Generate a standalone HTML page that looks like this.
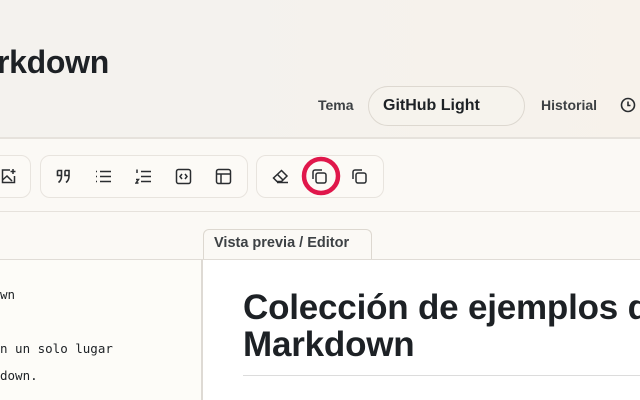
<!DOCTYPE html>
<html><head><meta charset="utf-8"><style>
body{margin:0;width:640px;height:400px;overflow:hidden;font-family:"Liberation Sans",sans-serif;background:#fbf9f5;position:relative}
.hdr{position:absolute;left:0;top:0;width:640px;height:137px;background:linear-gradient(90deg,#f4f2ee 0%,#f4f2ee 30%,#f7f2eb 100%);border-bottom:2px solid #e6e2dc}
.title{position:absolute;left:-3px;top:44px;font-size:32px;font-weight:bold;color:#1d2125;letter-spacing:-0.3px}
.tema{position:absolute;left:318px;top:97px;font-size:14px;font-weight:bold;color:#3d4144}
.sel{position:absolute;left:368px;top:86px;width:157px;height:40px;border:1px solid #ddd8d0;border-radius:20px;background:#f6f3ed;box-sizing:border-box}
.sel span{position:absolute;left:14px;top:10px;font-size:16px;font-weight:bold;color:#1d2125}
.hist{position:absolute;left:541px;top:97px;font-size:14px;font-weight:bold;color:#3d4144}
.grp{position:absolute;top:155px;height:43px;border:1px solid #e8e4de;border-radius:10px;background:#fcfaf6;box-sizing:border-box}
.ic{position:absolute;top:168px}
.tb{position:absolute;left:0;top:211px;width:640px;height:1px;background:#e6e2dc}
.tab{position:absolute;left:203px;top:229px;width:169px;height:31px;border:1px solid #ddd8d0;border-bottom:none;border-radius:6px 6px 0 0;background:#fbf9f5;box-sizing:border-box;font-size:14.5px;font-weight:bold;color:#3d4144;padding:5px 0 0 10px;white-space:nowrap}
.line2{position:absolute;left:0;top:259px;width:640px;height:1px;background:#e0dcd6}
.ed{position:absolute;left:0;top:260px;width:201px;height:140px;background:#fdfcf8;border-right:2px solid #dedad4;font-family:"DejaVu Sans Mono","Liberation Mono",monospace;font-size:12.5px;color:#1d2125}
.ed div{position:absolute;left:0;white-space:pre}
.pv{position:absolute;left:203px;top:260px;width:437px;height:140px;background:#fff;overflow:hidden}
.h1{position:absolute;left:40px;top:29px;font-size:35px;font-weight:bold;line-height:37px;color:#1d2125;white-space:nowrap;letter-spacing:-0.2px}
.hr{position:absolute;left:40px;top:115px;width:400px;height:1px;background:#dcdcdc}
</style></head><body>
<div class="hdr">
<div class="title">rkdown</div>
<div class="tema">Tema</div>
<div class="sel"><span>GitHub Light</span></div>
<div class="hist">Historial</div>
<svg style="position:absolute;left:620px;top:97px" width="16" height="16" viewBox="0 0 16 16" fill="none" stroke="#2a2d30" stroke-width="1.6"><circle cx="8" cy="8" r="6.5"/><path d="M8 4.5V8.5H10.5"/></svg>
</div>
<div class="grp" style="left:-10px;width:41px"></div>
<svg class="ic" style="left:0" width="17" height="17" viewBox="0 0 17 17" fill="none" stroke="#2a2d30" stroke-width="1.5"><path d="M10 2H2.5V14.5H14.5V8"/><path d="M2.5 12L7 8L12 13"/><path d="M13 1V6M10.5 3.5H15.5"/></svg>
<div class="grp" style="left:40px;width:208px"></div>
<svg class="ic" style="left:55px" width="17" height="17" viewBox="0 0 17 17" fill="none" stroke="#2a2d30" stroke-width="1.6"><path d="M2.5 2.5H6.5V8C6.5 11 5.5 13 3.5 14.5M2.5 2.5V7.5H6.5"/><path d="M10 2.5H14V8C14 11 13 13 11 14.5M10 2.5V7.5H14"/></svg>
<svg class="ic" style="left:95px" width="17" height="17" viewBox="0 0 17 17" fill="none" stroke="#2a2d30" stroke-width="1.5"><path d="M5 3.5H16M5 8.5H16M5 13.5H16M1 3.5H2M1 8.5H2M1 13.5H2"/></svg>
<svg class="ic" style="left:135px" width="17" height="17" viewBox="0 0 17 17" fill="none" stroke="#2a2d30" stroke-width="1.5"><path d="M6 3.5H16M6 8.5H16M6 13.5H16M2 1.5V5M1 11.5H3.5L1 15H3.5"/></svg>
<svg class="ic" style="left:175px" width="17" height="17" viewBox="0 0 17 17" fill="none" stroke="#2a2d30" stroke-width="1.5"><rect x="1.5" y="1.5" width="14" height="14" rx="2"/><path d="M7 6L5 8.5L7 11M10 6L12 8.5L10 11"/></svg>
<svg class="ic" style="left:215px" width="17" height="17" viewBox="0 0 17 17" fill="none" stroke="#2a2d30" stroke-width="1.5"><rect x="1.5" y="1.5" width="14" height="14" rx="2"/><path d="M1.5 6H15.5M6 6V15.5"/></svg>
<div class="grp" style="left:256px;width:128px"></div>
<svg class="ic" style="left:272px" width="17" height="17" viewBox="0 0 17 17" fill="none" stroke="#2a2d30" stroke-width="1.5"><path d="M9.5 2.5L15 8L9.5 13.5H5L1.5 10L9.5 2.5Z"/><path d="M5.5 6.5L11 12M5 14.5H16"/></svg>
<svg class="ic" style="left:311px" width="17" height="17" viewBox="0 0 17 17" fill="none" stroke="#2a2d30" stroke-width="1.5"><rect x="5" y="5" width="10" height="10" rx="2"/><path d="M2 11V4A2 2 0 0 1 4 2H11"/></svg>
<svg style="position:absolute;left:300px;top:155px" width="42" height="42"><circle cx="21" cy="21" r="17" fill="none" stroke="#e0174b" stroke-width="4.5"/></svg>
<svg class="ic" style="left:351px" width="17" height="17" viewBox="0 0 17 17" fill="none" stroke="#2a2d30" stroke-width="1.5"><rect x="5" y="5" width="10" height="10" rx="2"/><path d="M2 11V4A2 2 0 0 1 4 2H11"/></svg>
<div class="tb"></div>
<div class="tab">Vista previa / Editor</div>
<div class="line2"></div>
<div class="ed">
<div style="top:27px">wn</div>
<div style="top:81px">n un solo lugar</div>
<div style="top:108px">down.</div>
</div>
<div class="pv">
<div class="h1">Colección de ejemplos de<br>Markdown</div>
<div class="hr"></div>
</div>
</body></html>
